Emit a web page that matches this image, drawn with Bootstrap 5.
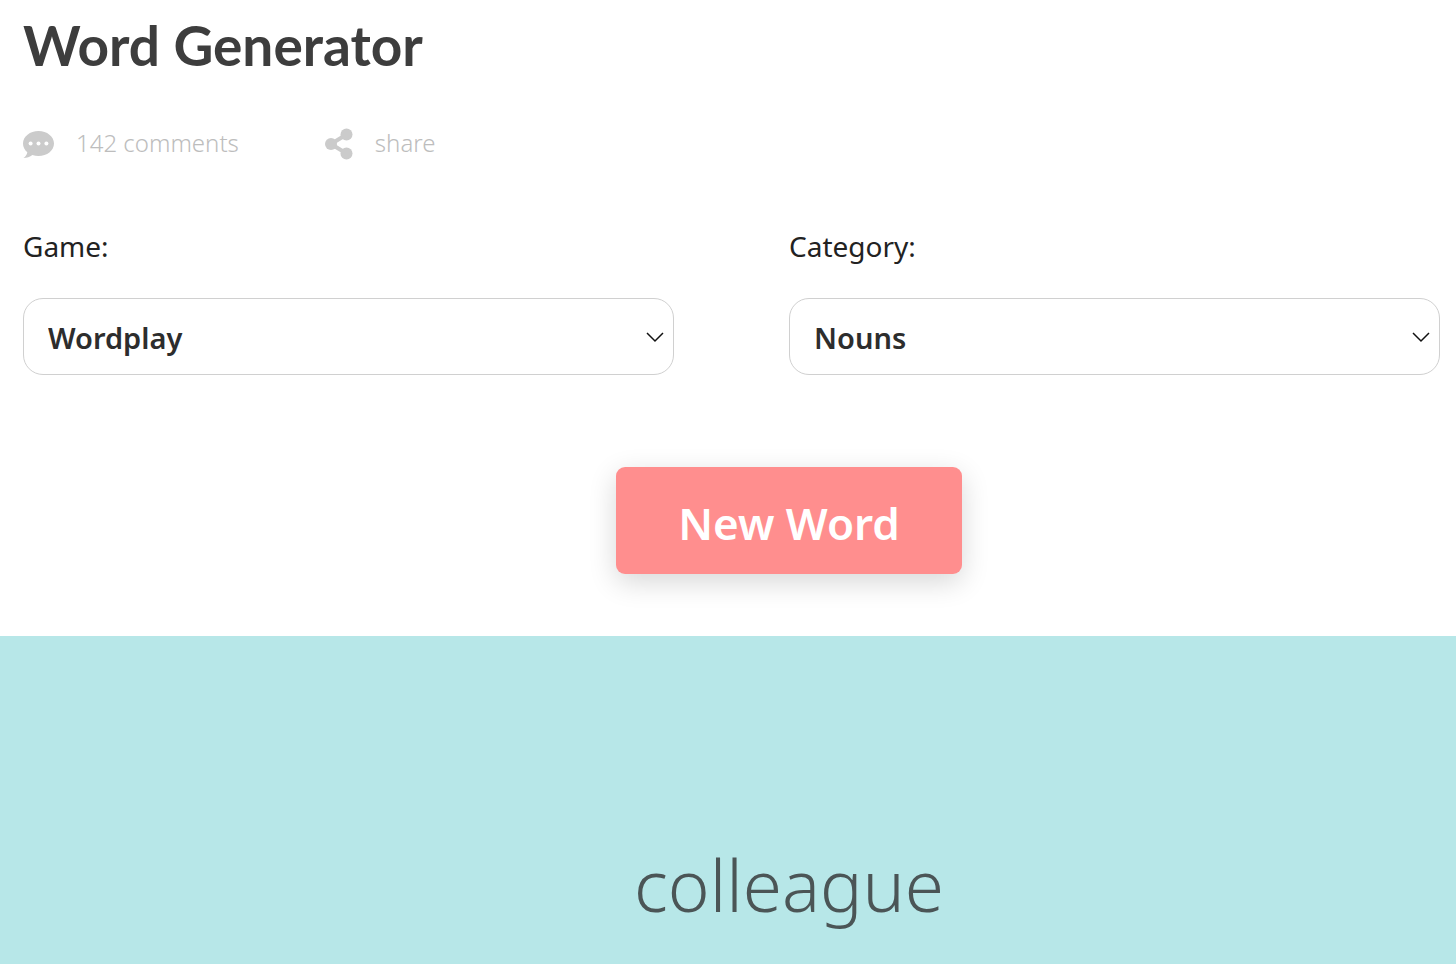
<!DOCTYPE html>
<html lang="en">
<head>
<meta charset="utf-8">
<meta name="viewport" content="width=device-width, initial-scale=1">
<title>Word Generator</title>
<link href="https://cdn.jsdelivr.net/npm/bootstrap@5.3.0/dist/css/bootstrap.min.css" rel="stylesheet">
<style>
  body { font-family: "Noto Sans", "Open Sans", sans-serif; color: #222; background: #fff; }
  .page-top { padding: 11px 16px 62px 23px; }
  .page-title { font: 700 55px/68px Lato, sans-serif; color: #3d3d3d; margin-bottom: 45px; }
  .meta-links { gap: 86px; height: 40px; margin-bottom: 60px; }
  .meta-link { gap: 22px; color: #bdbdbd; font-size: 24px; line-height: 40px; font-weight: 300; text-decoration: none; }
  .meta-link span { padding-bottom: 2px; }
  .meta-link svg { fill: #cbcbcb; stroke: #cbcbcb; flex: none; }
  .field-row { --bs-gutter-x: 115px; margin-bottom: 92px; }
  .field-label { font-size: 28px; line-height: 44px; margin-bottom: 30px; }
  .picker { height: 77px; padding: 2px 48px 0 24px; font-size: 29px; font-weight: 600; color: #2d2d2d;
    border: 1px solid #d0d0d0; border-radius: 20px; background-size: 18px 12px; background-position: right 9px center;
    background-image: url("data:image/svg+xml,%3csvg xmlns='http://www.w3.org/2000/svg' viewBox='0 0 18 12'%3e%3cpath d='M1 2l8 8 8-8' fill='none' stroke='%23111' stroke-width='1.5'/%3e%3c/svg%3e"); }
  .centered { padding-left: 122px; }
  .page-top .centered { padding-left: 115px; }
  .new-word { height: 107px; padding: 4px 62px 0; font-size: 44px; font-weight: 600; color: #fff; background: #ff8e8e;
    border: 0; border-radius: 9px; box-shadow: 0 8px 28px rgba(0,0,0,.16); }
  .new-word:hover { color: #fff; background: #ff7f7f; }
  .result { background: #b7e7e8; padding-top: 197px; padding-bottom: 24px; }
  .result-word { font-size: 71px; line-height: 104px; font-weight: 300; color: #4b5556; }
</style>
</head>
<body class="min-vh-100 d-flex flex-column">
<header class="page-top">
  <h1 class="page-title">Word Generator</h1>
  <nav class="meta-links d-flex align-items-center" aria-label="Page actions">
    <a class="meta-link d-flex align-items-center" href="#comments">
      <svg width="31" height="30" viewBox="0 0 31 30" stroke="none" aria-hidden="true"><path stroke="none" d="M15.500 2C7 2 0 7.500 0 14.500c0 3.500 1.600 6.500 4.300 8.700C4 25.500 2.500 27.600.4 29c3.500 0 6.600-1.100 9-2.900 1.900.6 4 .9 6.100.9C24 27 31 21.500 31 14.500S24 2 15.500 2z"/><g fill="#fff" stroke="none"><circle cx="7.600" cy="14.500" r="2"/><circle cx="15.500" cy="14.500" r="2"/><circle cx="23.400" cy="14.500" r="2"/></g></svg>
      <span>142 comments</span>
    </a>
    <a class="meta-link d-flex align-items-center" href="#share">
      <svg width="28" height="32" viewBox="0 0 28 32" aria-hidden="true"><path d="M21.500 6.500L6 16l15.500 9.500" fill="none" stroke-width="4"/><g stroke="none"><circle cx="21.500" cy="6.500" r="6"/><circle cx="6" cy="16" r="6"/><circle cx="21.500" cy="25.500" r="6"/></g></svg>
      <span>share</span>
    </a>
  </nav>
  <div class="row field-row">
    <div class="col-6">
      <label class="field-label d-block" for="game">Game:</label>
      <select class="form-select picker" id="game"><option>Wordplay</option></select>
    </div>
    <div class="col-6">
      <label class="field-label d-block" for="category">Category:</label>
      <select class="form-select picker" id="category"><option>Nouns</option></select>
    </div>
  </div>
  <div class="centered text-center">
    <button class="btn new-word" type="button">New Word</button>
  </div>
</header>
<main class="result centered text-center flex-grow-1">
  <p class="result-word mb-0">colleague</p>
</main>
<script src="https://cdn.jsdelivr.net/npm/bootstrap@5.3.0/dist/js/bootstrap.bundle.min.js"></script>
</body>
</html>
